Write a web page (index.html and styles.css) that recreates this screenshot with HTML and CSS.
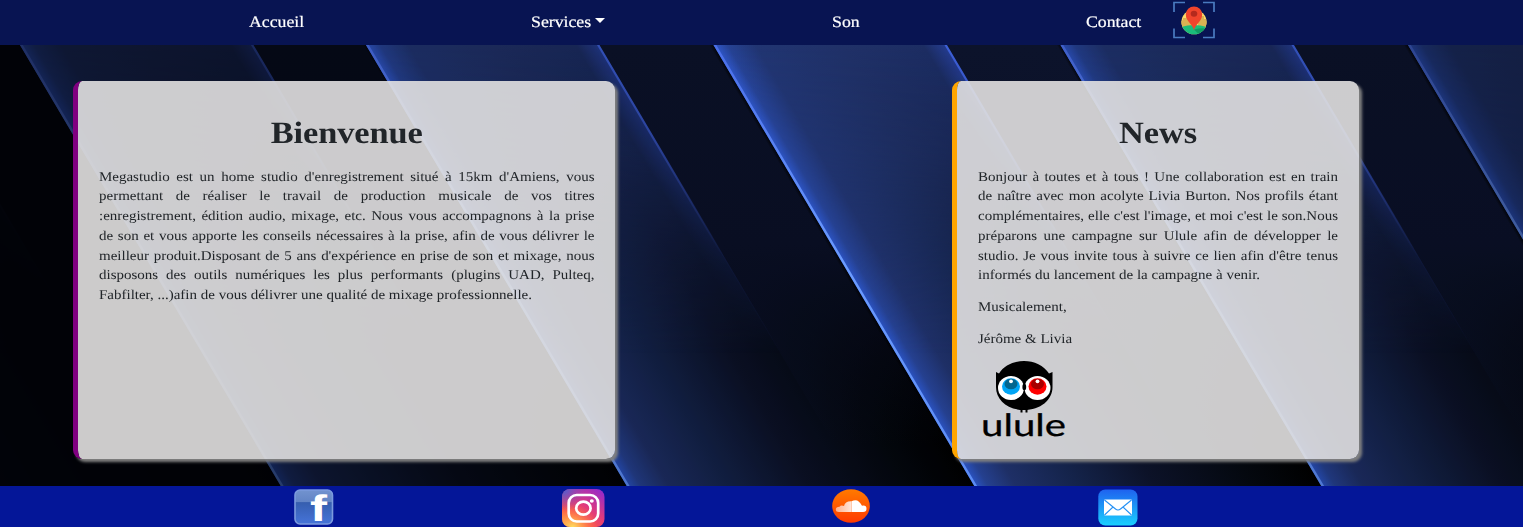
FILE: index.html
```html
<!DOCTYPE html>
<html lang="fr">
<head>
<meta charset="utf-8">
<title>Megastudio</title>
<link rel="stylesheet" href="styles.css">
</head>
<body>
<nav class="nav">
  <a class="nav-link"><span class="wide">Accueil</span></a>
  <a class="nav-link"><span class="wide">Services</span><i class="caret"></i></a>
  <a class="nav-link"><span class="wide">Son</span></a>
  <a class="nav-link"><span class="wide">Contact</span></a>
  <svg class="map-icon" width="42" height="38" viewBox="0 0 42 38">
    <path d="M1 11V1.500H12M30 1.500H41V11M41 27.500V36.500H30M12 36.500H1V27.500" fill="none" stroke="#4a7bc0" stroke-width="1.700"/>
    <clipPath id="globe"><ellipse cx="21" cy="21" rx="12.600" ry="12.300"/></clipPath>
    <g clip-path="url(#globe)">
      <rect x="8" y="8" width="26" height="26" fill="#fddc68"/>
      <path d="M8 20l2-1v-2h3v-2h3v4h2v7H8zM25 26v-8h2v-3h4v3h4v9z" fill="#d9b253"/>
      <path d="M8 26q13-4 26 0v8H8z" fill="#1bbd7b"/>
      <path d="M21 28.500q7-2 13-1v5l-8 1z" fill="#0f9d63"/>
    </g>
    <path d="M21 29.500c-1-6-8.200-9-8.200-16.200a8.200 7.800 0 0 1 16.400 0C29.200 20.500 22 23.500 21 29.500z" fill="#f1452c"/>
    <ellipse cx="21" cy="12.800" rx="3.300" ry="3" fill="#b52a1d"/>
  </svg>
</nav>
<main class="stage">
  <svg class="backdrop" viewBox="0 0 1523 441" preserveAspectRatio="none">
    <defs>
      <linearGradient id="base">
        <stop offset="0" stop-color="#2b55c8"/><stop offset=".04" stop-color="#25408f"/><stop offset=".12" stop-color="#1e2f66"/>
        <stop offset=".3" stop-color="#14234a"/><stop offset=".52" stop-color="#0c1228"/><stop offset=".8" stop-color="#04080f"/><stop offset="1" stop-color="#000"/>
      </linearGradient>
      <linearGradient id="panel">
        <stop offset="0" stop-color="#3058cc"/><stop offset=".06" stop-color="#264294"/><stop offset=".18" stop-color="#213572"/>
        <stop offset=".55" stop-color="#203168"/><stop offset=".9" stop-color="#1c2d63"/><stop offset="1" stop-color="#243c92"/>
      </linearGradient>
      <linearGradient id="gap" x1="0" y1="0" x2="0" y2="1"><stop offset="0" stop-color="#0c132b"/><stop offset=".5" stop-color="#0b1128"/><stop offset="1" stop-color="#0b1128" stop-opacity="0"/></linearGradient>
      <linearGradient id="fall" x1="0" y1="0" x2="0" y2="1"><stop offset="0" stop-color="#fff"/><stop offset=".25" stop-color="#bbb"/><stop offset=".5" stop-color="#444"/><stop offset=".7" stop-color="#000"/></linearGradient>
      <linearGradient id="edge2" x1="0" y1="0" x2="0" y2="1"><stop offset="0" stop-color="#3c5fd8"/><stop offset=".2" stop-color="#3450ba"/><stop offset=".48" stop-color="#2b3f90" stop-opacity="0"/></linearGradient>
      <linearGradient id="edge" x1="0" y1="0" x2="0" y2="1"><stop offset="0" stop-color="#4a6ee8"/><stop offset=".5" stop-color="#6c9cff"/><stop offset="1" stop-color="#5c8cf4"/></linearGradient>
      <linearGradient id="shade"><stop offset="0" stop-color="#000" stop-opacity="0"/><stop offset="1" stop-color="#000" stop-opacity=".75"/></linearGradient>
      <mask id="fade" maskUnits="userSpaceOnUse" x="0" y="0" width="347" height="441"><rect width="347" height="441" fill="url(#fall)"/></mask>
      <g id="band">
        <rect width="347.500" height="441" fill="url(#base)"/>
        <rect x="232" width="115.500" height="400" fill="url(#gap)"/>
        <rect width="233" height="441" fill="url(#panel)" mask="url(#fade)"/>
        <rect x="231" width="2.500" height="441" fill="url(#edge2)"/>
        <rect x="343" width="4.500" height="441" fill="url(#shade)"/>
        <rect x="0" width="2.800" height="441" fill="url(#edge)"/>
      </g>
    </defs>
    <rect width="1523" height="441" fill="#010206"/>
    <g transform="skewX(30.600)">
      <use href="#band" x="-327" opacity=".04"/>
      <use href="#band" x="20" opacity=".42"/>
      <use href="#band" x="366" opacity=".84"/>
      <use href="#band" x="713.500"/>
      <use href="#band" x="1060.500" opacity=".86"/>
      <use href="#band" x="1408" opacity=".62"/>
    </g>
  </svg>
  <section class="card card-welcome">
    <div class="copy">
      <h1>Bienvenue</h1>
      <p>Megastudio est un home studio d'enregistrement situé à 15km d'Amiens, vous permettant de réaliser le travail de production musicale de vos titres :enregistrement, édition audio, mixage, etc. Nous vous accompagnons à la prise de son et vous apporte les conseils nécessaires à la prise, afin de vous délivrer le meilleur produit.Disposant de 5 ans d'expérience en prise de son et mixage, nous disposons des outils numériques les plus performants (plugins UAD, Pulteq, Fabfilter, ...)afin de vous délivrer une qualité de mixage professionnelle.</p>
    </div>
  </section>
  <section class="card card-news">
    <div class="copy">
      <h1>News</h1>
      <p>Bonjour à toutes et à tous ! Une collaboration est en train de naître avec mon acolyte Livia Burton. Nos profils étant complémentaires, elle c'est l'image, et moi c'est le son.Nous préparons une campagne sur Ulule afin de développer le studio. Je vous invite tous à suivre ce lien afin d'être tenus informés du lancement de la campagne à venir.</p>
      <p>Musicalement,</p>
      <p>Jérôme &amp; Livia</p>
    </div>
    <svg class="ulule" width="92" height="90" viewBox="0 0 92 90">
      <path d="M18 15l3 1.500C26 8.500 36 4 46 4s20 4.500 25 12.500l3.500-1.500V30c0 13-12 23-28.500 23S18 43 18 30z"/>
      <path d="M43.500 52v3.500M48.500 52v3.500" stroke="#000" stroke-width="2"/>
      <ellipse cx="33" cy="31" rx="13" ry="12" fill="#fff"/><ellipse cx="59.500" cy="31" rx="13" ry="12" fill="#fff"/>
      <ellipse cx="46.300" cy="30" rx="1.900" ry="3.200"/>
      <ellipse cx="33" cy="29.500" rx="9" ry="8.200" fill="#00a5f5"/><ellipse cx="33" cy="27" rx="6.500" ry="5.300" fill="#04668f"/><circle cx="33" cy="24.300" r="1.900" fill="#fff"/>
      <ellipse cx="59.500" cy="29.500" rx="9" ry="8.200" fill="#f00"/><ellipse cx="59.500" cy="27" rx="6.500" ry="5.300" fill="#a80000"/><circle cx="59.500" cy="24.300" r="1.900" fill="#fff"/>
      <text class="ulule-name" x="3" y="78.500" textLength="85" lengthAdjust="spacingAndGlyphs">ulule</text>
    </svg>
  </section>
</main>
<footer class="footer">
  <svg width="40" height="36" viewBox="0 0 40 36">
    <defs><linearGradient id="fb" x1="0" y1="0" x2="0" y2="1"><stop offset="0" stop-color="#7293cf"/><stop offset=".35" stop-color="#6284c5"/><stop offset=".37" stop-color="#365eaf"/><stop offset="1" stop-color="#4674d9"/></linearGradient></defs>
    <rect x="1" y="1" width="37.500" height="34" rx="5" fill="url(#fb)" stroke="#7b9ade" stroke-width="1.600"/>
    <text class="fb-mark" x="16" y="32" textLength="17" lengthAdjust="spacingAndGlyphs">f</text>
  </svg>
  <svg width="43" height="38" viewBox="0 0 43 38">
    <defs>
      <linearGradient id="ig" x1="0" y1="1" x2=".8" y2="0"><stop offset="0" stop-color="#ff9b39"/><stop offset=".3" stop-color="#ff5548"/><stop offset=".6" stop-color="#e13a7b"/><stop offset="1" stop-color="#9c2bc4"/></linearGradient>
      <radialGradient id="ig-blue" cx="0" cy="0" r=".6"><stop offset="0" stop-color="#3a68d8"/><stop offset="1" stop-color="#7a3fd0" stop-opacity="0"/></radialGradient>
      <radialGradient id="ig-yellow" cx=".25" cy="1" r=".6"><stop offset="0" stop-color="#ffdc60"/><stop offset="1" stop-color="#ff8040" stop-opacity="0"/></radialGradient>
    </defs>
    <rect width="42.500" height="38" rx="8" fill="url(#ig)"/><rect width="42.500" height="38" rx="8" fill="url(#ig-blue)"/><rect width="42.500" height="38" rx="8" fill="url(#ig-yellow)"/>
    <g fill="none" stroke="#fff" stroke-width="2.700"><rect x="6.700" y="6" width="29.500" height="26.500" rx="8"/><ellipse cx="21.400" cy="19.200" rx="7.200" ry="6.500"/></g>
    <ellipse cx="29.800" cy="12" rx="2" ry="1.700" fill="#fff"/>
  </svg>
  <svg width="38" height="34" viewBox="0 0 38 34">
    <defs>
      <linearGradient id="sc" x1="0" y1="0" x2="0" y2="1"><stop offset="0" stop-color="#ff7a00"/><stop offset="1" stop-color="#ff3a00"/></linearGradient>
      <linearGradient id="cloud"><stop offset="0" stop-color="#ffb08a"/><stop offset="1" stop-color="#ffe6da"/></linearGradient>
    </defs>
    <ellipse cx="19" cy="17" rx="18.800" ry="16.800" fill="url(#sc)"/>
    <path d="M19.500 23V12.300Q26 8.600 30 16.700q4.500-.8 4.500 3 0 3.300-3.500 3.300z" fill="#fff"/>
    <path d="M19.500 23V12.300Q13 12 12 17q-3-1.500-4.500.8Q3.800 18 3.800 20.500T7 23z" fill="url(#cloud)"/>
  </svg>
  <svg width="40" height="37" viewBox="0 0 40 37">
    <defs><linearGradient id="ml" x1="0" y1="0" x2="0" y2="1"><stop offset="0" stop-color="#1f62ef"/><stop offset="1" stop-color="#1ad0ff"/></linearGradient></defs>
    <rect x=".3" y=".5" width="39.200" height="36" rx="7" fill="url(#ml)"/>
    <rect x="6" y="10.500" width="28" height="16" rx="1" fill="#fff"/>
    <path d="M6.500 11l11 9q2.500 2 5 0l11-9M6.500 26l8.500-8M33.500 26L25 18" fill="none" stroke="#2490f5" stroke-width="1.100"/>
  </svg>
</footer>
</body>
</html>
```
FILE: styles.css
```css
* { box-sizing: border-box; }
body {
  margin: 0;
  height: 527px;
  display: grid;
  grid-template-rows: 45px 441px 41px;
  overflow: hidden;
  background: #000;
  font-family: "Liberation Serif", "Times New Roman", serif;
  color: #212529;
  text-rendering: geometricPrecision;
}
.nav {
  display: grid;
  grid-template-columns: 282px 301px 254px 86.5px auto;
  justify-content: start;
  align-items: center;
  padding-left: 249px;
  background: #081452;
  color: #fff;
}
.nav-link { display: flex; align-items: center; font-size: 16px; line-height: 24px; -webkit-text-stroke: .2px #fff; }
.wide { display: inline-block; transform: scaleX(1.11); transform-origin: left; }
.caret { margin: 0 0 4px 10px; border: 5.5px solid transparent; border-top: 5px solid #fff; border-bottom: 0; }
.map-icon { margin-bottom: 5px; }
.stage {
  position: relative;
  display: grid;
  grid-template-columns: 542px 406.500px;
  column-gap: 337px;
  padding: 36px 0 27.500px 73px;
}
.backdrop { position: absolute; inset: 0; width: 100%; height: 100%; }
.card {
  position: relative;
  padding: 29.5px 21px 0 20.500px;
  border-left: 5px solid;
  border-radius: 9px;
  background: rgba(226, 225, 225, .9);
  background-clip: padding-box;
  box-shadow: 3px 3px 3px #808080;
}
.card-welcome { border-color: #800080; }
.card-news { border-color: #ffa500; }
.copy { width: calc(100% / 1.11); transform: scaleX(1.11); transform-origin: left; }
h1 { margin: 0; font-size: 31px; line-height: 44px; letter-spacing: -.1px; text-align: center; }
p { margin: 0 0 12px; font-size: 13.5px; line-height: 19.75px; text-align: justify; }
h1 + p { margin-top: 12px; }
.ulule { display: block; margin-top: -4px; overflow: visible; }
.ulule-name { font: 31px/1 "Lato", sans-serif; fill: #000; stroke: #000; stroke-width: .3px; stroke-linejoin: round; }
.fb-mark { font: bold 37px/1 "Liberation Sans", sans-serif; fill: #fff; }
.footer {
  display: grid;
  grid-template-columns: 268px 270px 266px auto;
  justify-content: start;
  align-items: start;
  padding: 3px 0 0 294px;
  background: #041698;
}
.footer svg { overflow: visible; }
```
